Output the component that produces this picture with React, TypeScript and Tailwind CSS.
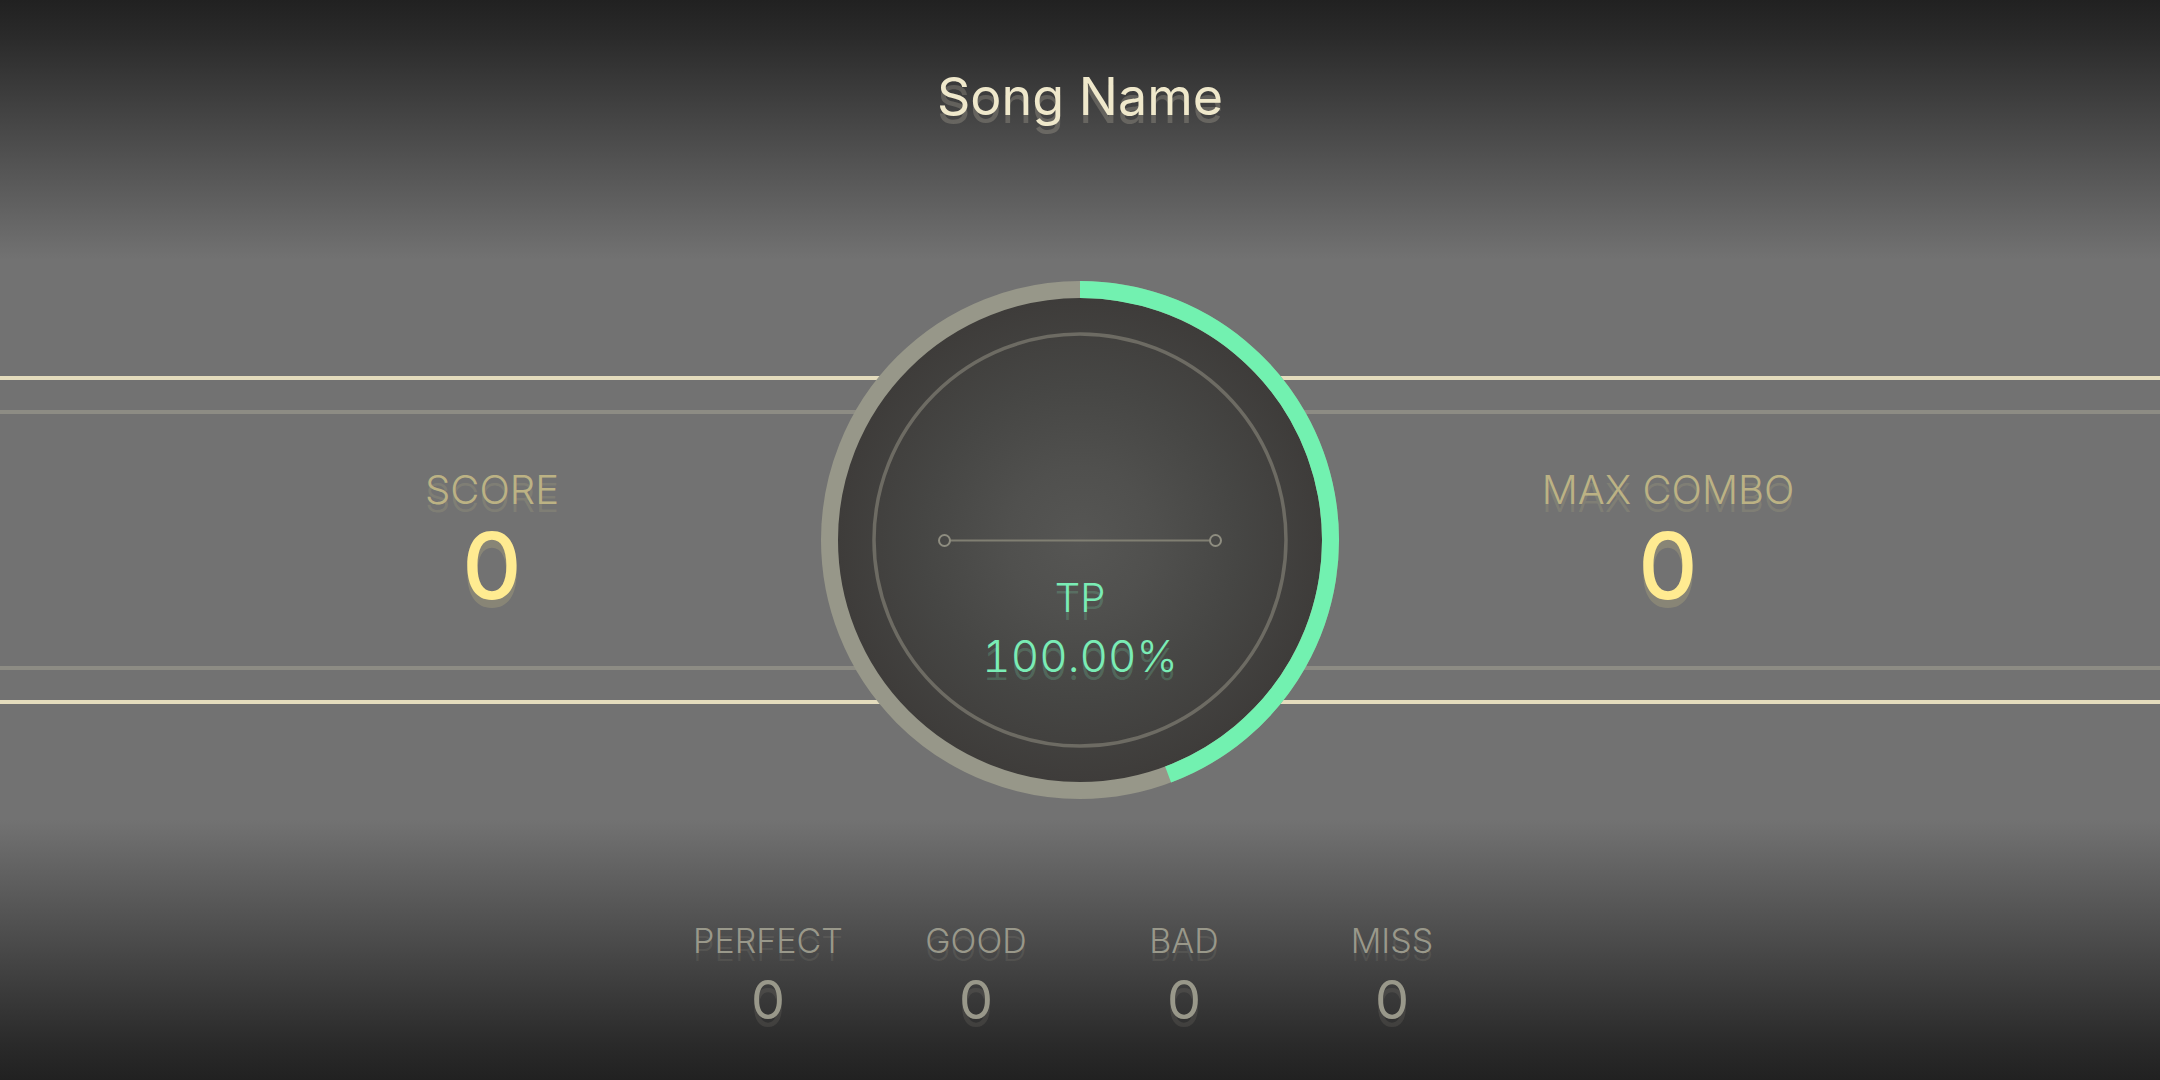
import React from "react";

type StatProps = { label: string; value: string };

function MainStat({ label, value }: StatProps) {
  return (
    <dl className="flex flex-col items-center pb-1 text-center">
      <dt className="text-[40px] font-light leading-[56px] text-[#bcb284] [text-shadow:0_8px_0_rgba(188,178,132,0.2)]">
        {label}
      </dt>
      <dd className="text-[92px] font-medium leading-[96px] text-[#ffeb91] [text-shadow:0_8px_0_rgba(255,235,145,0.16)]">
        {value}
      </dd>
    </dl>
  );
}

function Judgement({ label, value }: StatProps) {
  return (
    <dl className="flex flex-col items-center text-center text-[#99988a] [text-shadow:0_8px_0_rgba(153,152,138,0.16)]">
      <dt className="text-[34px] font-light leading-[48px]">{label}</dt>
      <dd className="text-[54px] font-normal leading-[70px]">{value}</dd>
    </dl>
  );
}

function Dial() {
  return (
    <svg viewBox="0 0 520 520" className="col-start-1 row-start-1 size-[520px]" aria-hidden="true">
      <defs>
        <radialGradient id="dial-fill" cx="260" cy="260" r="242" gradientUnits="userSpaceOnUse">
          <stop offset="0" stopColor="#565654" />
          <stop offset="0.3" stopColor="#50504e" />
          <stop offset="0.65" stopColor="#464644" />
          <stop offset="1" stopColor="#3e3c3a" />
        </radialGradient>
      </defs>
      <circle cx="260" cy="260" r="250.5" fill="url(#dial-fill)" stroke="#979789" strokeWidth="17" />
      <path d="M260 9.5A250.5 250.5 0 0 1 348.1 494.5" fill="none" stroke="#72f1b0" strokeWidth="17" />
      <circle cx="260" cy="260" r="206" fill="none" stroke="#6d6b63" strokeWidth="3.5" />
      <g fill="none" stroke="#8e8d80" strokeWidth="2">
        <path d="M130 260.5H390" stroke="#807f72" />
        <circle cx="124.5" cy="260.5" r="5.5" />
        <circle cx="395.5" cy="260.5" r="5.5" />
      </g>
    </svg>
  );
}

const judgements: StatProps[] = [
  { label: "PERFECT", value: "0" },
  { label: "GOOD", value: "0" },
  { label: "BAD", value: "0" },
  { label: "MISS", value: "0" },
];

export default function App() {
  return (
    <main className="grid min-h-screen grid-rows-[280px_1fr_280px] overflow-hidden bg-[linear-gradient(to_bottom,#212121_0,#2a2a2a_36px,#727272_260px,#727272_calc(100%_-_260px),#2a2a2a_calc(100%_-_36px),#212121_100%)] font-[Inter,Roboto,sans-serif]">
      <header className="flex justify-center pt-[65px]">
        <h1 className="text-[52px] font-normal leading-[64px] text-[#efe8cb] [text-shadow:0_8px_0_rgba(239,232,203,0.2)]">
          Song Name
        </h1>
      </header>

      <section className="grid grid-cols-1 items-center">
        <div className="col-start-1 row-start-1 border-y-4 border-[#e4dcbd] py-[30px]">
          <div className="grid h-[260px] grid-cols-2 items-center border-y-4 border-[#8d8c84]">
            <div className="pr-24">
              <MainStat label="SCORE" value="0" />
            </div>
            <div className="pl-24">
              <MainStat label="MAX COMBO" value="0" />
            </div>
          </div>
        </div>

        <div className="col-start-1 row-start-1 grid justify-self-center">
          <Dial />
          <dl className="col-start-1 row-start-1 pt-[288px] text-center font-light leading-[60px] text-[#7aecb5] [text-shadow:0_8px_0_rgba(122,236,181,0.2)]">
            <dt className="text-[40px] leading-[60px]">TP</dt>
            <dd className="text-[44px] leading-[56px] tabular-nums">100.00%</dd>
          </dl>
        </div>
      </section>

      <footer className="grid grid-cols-[repeat(4,208px)] content-start justify-center pt-[117px]">
        {judgements.map((item) => (
          <Judgement key={item.label} label={item.label} value={item.value} />
        ))}
      </footer>
    </main>
  );
}
